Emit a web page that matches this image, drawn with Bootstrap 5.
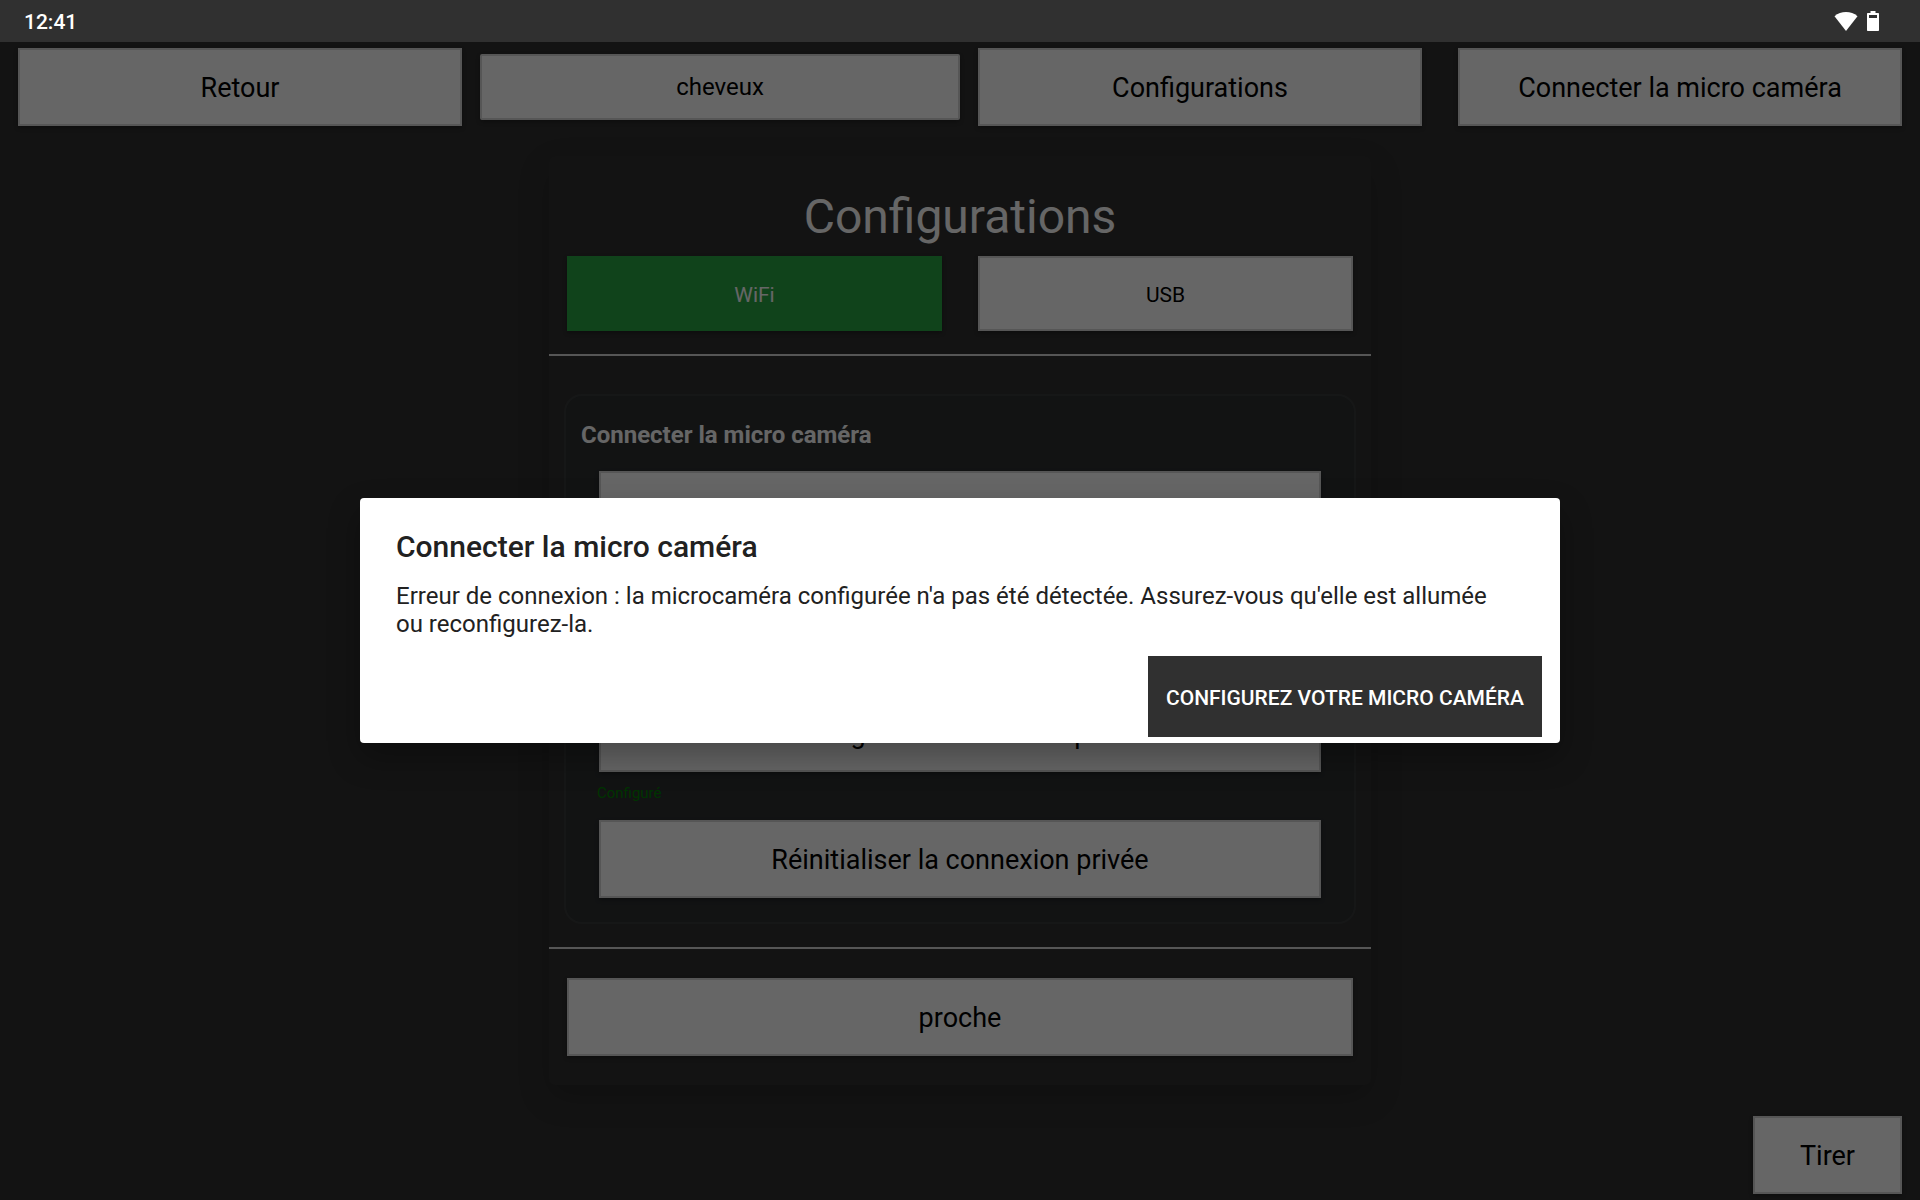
<!DOCTYPE html>
<html lang="fr">
<head>
<meta charset="utf-8">
<meta name="viewport" content="width=device-width, initial-scale=1">
<title>Configurations</title>
<link href="https://cdn.jsdelivr.net/npm/bootstrap@5.3.0/dist/css/bootstrap.min.css" rel="stylesheet">
<style>
  body { background: #303030; color: #fff; font-family: Roboto, "Liberation Sans", sans-serif; }
  .weight-medium { font-weight: 500; }
  .status-bar { height: 42px; padding: 2px 40px 0 24px; background: #303030; font-size: 21px; line-height: 24px; }
  .status-icons { padding-bottom: 2px; }
  .app-btn { height: 78px; padding: 2px 16px 0; border: 2px solid #d6d6d6; border-radius: 0; background: #fff; color: #000; font-size: 27px; line-height: 32px; box-shadow: 0 2px 4px rgba(0, 0, 0, .3); }
  .app-btn:hover { background: #f4f4f4; color: #000; }
  .zone-btn { height: 66px; padding-top: 0; border-radius: 2px; font-size: 24px; line-height: 28px; }
  .mode-btn { height: 75px; padding-top: 3px; font-size: 21px; line-height: 24px; }
  .mode-btn.active { border-color: #28a745; background: #28a745; color: #fff; }
  .top-actions { padding-top: 6px; }
  .cell-pad { padding: 0 18px; }
  .panel-area { padding-bottom: 2px; }
  .config-panel { max-width: 822px; padding: 33px 0 29px; border-radius: 6px; background: #303030; box-shadow: 0 12px 32px rgba(0, 0, 0, .2); }
  .panel-title { margin-bottom: 11px; font-size: 48px; line-height: 56px; }
  .mode-row { gap: 36px; padding: 0 18px; }
  .rule-line { height: 2px; margin: 23px 0 0; border: 0; background: #d6d6d6; opacity: 1; }
  .link-group { margin: 38px 15px 0; padding: 25px 15px 24px; border: 2px solid #393b3b; border-radius: 18px; background: #2d3031; }
  .group-title { margin-bottom: 22px; font-size: 24px; line-height: 28px; }
  .group-actions { padding: 0 18px; }
  .private-link { margin-top: 145px; }
  .state-text { margin: 12px 0 18px 16px; color: #008000; font-size: 15px; line-height: 18px; }
  .close-row { padding: 29px 18px 0; }
  .shoot-row { padding: 0 18px 6px; }
  .shoot-btn { min-width: 149px; }
  .scrim { padding-bottom: 2px; background: rgba(0, 0, 0, .6); }
  .alert-box { width: 62.5%; padding: 31px 18px 6px; border-radius: 4px; background: #fff; color: #212121; box-shadow: 0 14px 32px rgba(0, 0, 0, .3); }
  .alert-title { margin: 0 18px 17px; font-size: 30px; line-height: 36px; }
  .alert-copy { margin: 0 36px 18px 18px; font-size: 24px; line-height: 28px; }
  .alert-btn { height: 81px; padding: 4px 18px 0; border: 0; border-radius: 0; background: #303030; color: #fff; font-size: 21px; line-height: 24px; }
  .alert-btn:hover { background: #3c3c3c; color: #fff; }
</style>
</head>
<body class="min-vh-100 d-flex flex-column">

<header class="status-bar d-flex align-items-center justify-content-between weight-medium">
  <time>12:41</time>
  <div class="status-icons d-flex align-items-center gap-2">
    <svg width="24" height="20" viewBox="0 0 24 20" aria-hidden="true"><path fill="#fff" d="M12 20 .5 5.200C3.800 2.300 7.700 1 12 1s8.200 1.300 11.500 4.200z"/></svg>
    <svg width="14" height="22" viewBox="0 0 14 22" aria-hidden="true"><path fill="#fff" fill-rule="evenodd" d="M4.500 1h5v2h2.500c.6 0 1 .4 1 1v16c0 .6-.4 1-1 1H2c-.6 0-1-.4-1-1V4c0-.6.4-1 1-1h2.500zM3 5v3h8V5z"/></svg>
  </div>
</header>

<div class="position-relative flex-grow-1 d-flex flex-column">
  <nav class="top-actions row g-0 align-items-center" aria-label="Actions">
    <div class="col-3 cell-pad"><button type="button" class="btn app-btn w-100">Retour</button></div>
    <div class="col-3"><button type="button" class="btn app-btn zone-btn w-100">cheveux</button></div>
    <div class="col-3 cell-pad"><button type="button" class="btn app-btn w-100">Configurations</button></div>
    <div class="col-3 cell-pad"><button type="button" class="btn app-btn w-100">Connecter la micro caméra</button></div>
  </nav>

  <main class="panel-area flex-grow-1 d-flex align-items-center justify-content-center">
    <section class="config-panel w-100">
      <h1 class="panel-title text-center fw-normal">Configurations</h1>
      <div class="mode-row d-flex">
        <button type="button" class="btn app-btn mode-btn active flex-fill w-50">WiFi</button>
        <button type="button" class="btn app-btn mode-btn flex-fill w-50">USB</button>
      </div>
      <hr class="rule-line">
      <div class="link-group">
        <h2 class="group-title fw-bold" id="camera-title">Connecter la micro caméra</h2>
        <div class="group-actions">
          <button type="button" class="btn app-btn w-100" aria-labelledby="camera-title"></button>
          <button type="button" class="btn app-btn private-link w-100">Configurer votre réseau privé</button>
        </div>
        <p class="state-text">Configuré</p>
        <div class="group-actions">
          <button type="button" class="btn app-btn w-100">Réinitialiser la connexion privée</button>
        </div>
      </div>
      <hr class="rule-line">
      <div class="close-row"><button type="button" class="btn app-btn w-100">proche</button></div>
    </section>
  </main>

  <footer class="shoot-row d-flex justify-content-end">
    <button type="button" class="btn app-btn shoot-btn">Tirer</button>
  </footer>

  <div class="scrim position-absolute top-0 start-0 w-100 h-100 d-flex align-items-center justify-content-center">
    <div class="alert-box" role="alertdialog" aria-modal="true" aria-labelledby="alert-title" aria-describedby="alert-copy">
      <h2 class="alert-title weight-medium" id="alert-title">Connecter la micro caméra</h2>
      <p class="alert-copy" id="alert-copy">Erreur de connexion : la microcaméra configurée n'a pas été détectée. Assurez-vous qu'elle est allumée ou reconfigurez-la.</p>
      <div class="d-flex justify-content-end">
        <button type="button" class="btn alert-btn weight-medium text-uppercase">Configurez votre micro caméra</button>
      </div>
    </div>
  </div>
</div>

<script src="https://cdn.jsdelivr.net/npm/bootstrap@5.3.0/dist/js/bootstrap.bundle.min.js"></script>
</body>
</html>
